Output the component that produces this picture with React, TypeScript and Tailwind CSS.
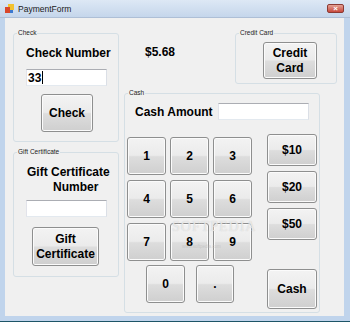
import type { ReactNode } from 'react';

// Vista-style push button
const BTN =
  'flex items-center justify-center rounded-[3px] border border-[#8e8f8f] bg-[linear-gradient(#f3f3f3_0%,#ebebeb_48%,#dddddd_52%,#cfcfcf_100%)] shadow-[inset_0_0_0_1px_#fbfbfb] text-[12px] font-bold leading-[15px] text-black text-center';

const TEXTBOX =
  'h-[17px] border border-[#abadb3] border-l-[#e2e3ea] border-r-[#dbdfe6] border-b-[#e3e9ef] bg-white';

function Group({ label, className, children }: { label: string; className: string; children?: ReactNode }) {
  return (
    <div className={`relative rounded-[3px] border border-[#d5dfe5] ${className}`}>
      <span className="absolute -top-[5px] left-[3px] bg-[#f0f0f0] px-[1px] text-[6.5px] leading-[8px] text-[#222]">
        {label}
      </span>
      {children}
    </div>
  );
}

function AppIcon() {
  return (
    <svg width="9" height="9" viewBox="0 0 9 9">
      <rect x="3" y="0" width="6" height="6" fill="#f2c230" />
      <rect x="0" y="3" width="5" height="6" fill="#d9472b" />
      <rect x="5" y="6" width="3" height="3" fill="#3b78d0" />
    </svg>
  );
}

export default function App() {
  const pad = ['1', '2', '3', '4', '5', '6', '7', '8', '9'];

  return (
    <div className="relative flex h-[322px] w-[350px] flex-col overflow-hidden bg-[#c0d4ec] font-['Liberation_Sans',Arial,sans-serif] text-black">
      {/* Title bar */}
      <div className="flex h-[18px] items-center border-b border-[#aebfd6] bg-[linear-gradient(#dde8f5,#c5d6eb)]">
        <div className="ml-[5px]">
          <AppIcon />
        </div>
        <span className="ml-[4px] text-[8.5px] leading-[10px] text-[#1a1a1a]">PaymentForm</span>
        <div className="ml-auto mr-[6px] flex h-[9px] w-[17px] items-center justify-center rounded-[2px] border border-[#8b3a33] bg-[linear-gradient(#e4a295,#c8493d)] text-[8px] font-bold leading-none text-white">
          ×
        </div>
      </div>

      {/* Client area */}
      <div className="flex pl-[5px] pr-[6px]">
        <div className="flex h-[298px] w-[339px] gap-[5px] bg-[#f0f0f0] pl-[8px] pt-[15px]">
          {/* Left column */}
          <div className="flex w-[106px] flex-col">
            <Group label="Check" className="h-[109px] w-[106px]">
              <div className="pl-[12px] pt-[12px]">
                <div className="text-[12px] font-bold leading-[14px]">Check Number</div>
                <div className={`${TEXTBOX} mt-[9px] flex w-[81px] items-center pl-[1px]`}>
                  <span className="text-[12px] font-bold leading-[14px]">33</span>
                  <span className="ml-[1px] h-[13px] w-px bg-black" />
                </div>
                <button className={`${BTN} ml-[15px] mt-[8px] h-[38px] w-[52px]`}>Check</button>
              </div>
            </Group>

            <Group label="Gift Certificate" className="mt-[10px] h-[125px] w-[106px]">
              <div className="pt-[12px]">
                <div className="pl-[13px] text-[12px] font-bold leading-[15px]">Gift Certificate</div>
                <div className="pl-[39px] text-[12px] font-bold leading-[15px]">Number</div>
                <div className={`${TEXTBOX} ml-[12px] mt-[5px] w-[81px]`} />
                <button className={`${BTN} ml-[18px] mt-[10px] h-[39px] w-[67px]`}>
                  Gift
                  <br />
                  Certificate
                </button>
              </div>
            </Group>
          </div>

          {/* Right column */}
          <div className="flex w-[213px] flex-col">
            <div className="flex h-[51px]">
              <div className="pl-[21px] pt-[12px] text-[12px] font-bold leading-[14px]">$5.68</div>
              <Group label="Credit Card" className="ml-auto h-[51px] w-[102px]">
                <button className={`${BTN} ml-[27px] mt-[8px] h-[37px] w-[54px]`}>
                  Credit
                  <br />
                  Card
                </button>
              </Group>
            </div>

            <Group label="Cash" className="mt-[9px] h-[220px] w-[196px]">
              <div className="mt-[9px] flex h-[17px] items-center">
                <div className="w-[93px] pl-[10px] text-[12px] font-bold leading-[14px]">Cash Amount</div>
                <div className={`${TEXTBOX} w-[91px]`} />
              </div>

              <div className="mt-[14px] flex items-start">
                <div className="ml-[2px] mt-[3px]">
                  <div className="grid grid-cols-[repeat(3,39px)] gap-x-[4px] gap-y-[5px]">
                    {pad.map((d) => (
                      <button key={d} className={`${BTN} h-[38px]`}>
                        {d}
                      </button>
                    ))}
                  </div>
                  <div className="mt-[4px] flex">
                    <button className={`${BTN} ml-[19px] h-[38px] w-[39px]`}>0</button>
                    <button className={`${BTN} ml-[11px] h-[38px] w-[38px]`}>.</button>
                  </div>
                </div>

                <div className="ml-[15px] flex w-[50px] flex-col gap-[5px]">
                  <button className={`${BTN} h-[32px]`}>$10</button>
                  <button className={`${BTN} h-[32px]`}>$20</button>
                  <button className={`${BTN} h-[32px]`}>$50</button>
                  <button className={`${BTN} mt-[24px] h-[40px]`}>Cash</button>
                </div>
              </div>
            </Group>
          </div>
        </div>
      </div>

      {/* Bottom frame */}
      <div className="h-[5px]" />
      <div className="h-[1px] bg-[#1d5567]" />

      {/* Softpedia watermark */}
      <div className="pointer-events-none absolute left-[172px] top-[219px] flex flex-col items-start">
        <span className="font-['Liberation_Serif',serif] text-[14px] leading-[15px] tracking-[1px] text-white/60 [text-shadow:0_0_1px_#c0c0c0]">
          SOFTPEDIA
        </span>
        <span className="ml-[10px] mt-[10px] text-[4.5px] leading-[6px] text-[#b8b8b8]/60">www.softpedia.com</span>
      </div>
    </div>
  );
}
